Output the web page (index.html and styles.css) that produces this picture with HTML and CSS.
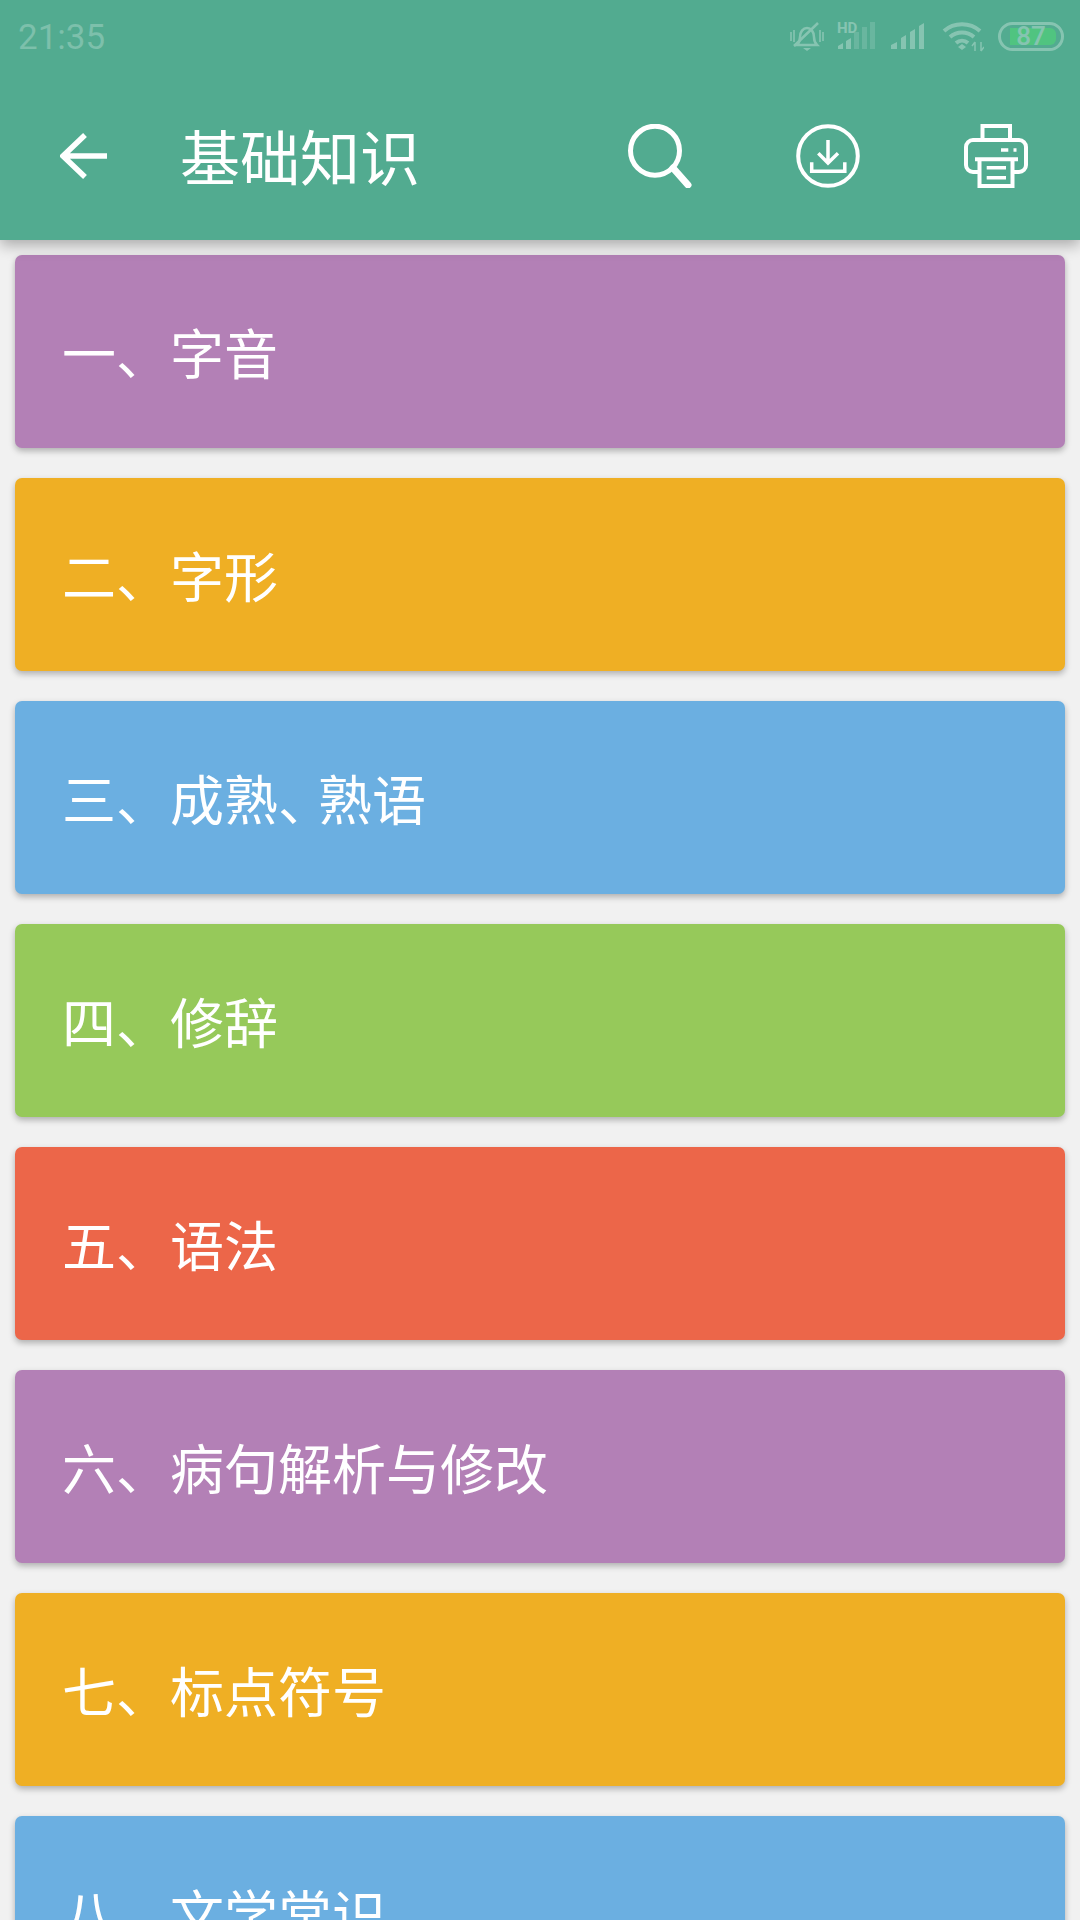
FILE: index.html

```html
<!DOCTYPE html>
<html lang="zh-CN">
<head>
  <meta charset="UTF-8">
  <meta name="viewport" content="width=device-width, initial-scale=1.0">
  <title>基础知识</title>
  <link rel="stylesheet" href="styles.css">
</head>
<body>

  <header class="appbar">
    <div class="status-bar">
      <span class="time">21:35</span>
      <div class="status-icons">
        <svg class="st-bell" width="34" height="30" viewBox="0 0 34 30">
          <path d="M7 23c2-2 3-4 3-8 0-5 3-9 7-9s7 4 7 9c0 4 1 6 3 8z" fill="none" stroke="#fff" stroke-width="2.500"/>
          <path d="M13 26h8l-4 3z" fill="#fff"/>
          <path d="M4 24L28 1" stroke="#fff" stroke-width="2.500"/>
          <path d="M1 10v9M4 8v12M30 8v12M33 10v9" stroke="#fff" stroke-width="1.600"/>
        </svg>
        <svg class="st-hd" width="40" height="28" viewBox="0 0 40 28">
          <text x="0" y="11" class="hd-label">HD</text>
          <path d="M1 27v-3l5-3v6zM9 27v-8l5-3v11z" fill="#fff"/>
          <path d="M17 27V10h5v17zM25 27V5h5v22zM33 27V0h5v27z" fill="#fff" opacity=".45"/>
        </svg>
        <svg class="st-signal" width="39" height="28" viewBox="0 0 39 28">
          <path d="M1 27v-4l6-3v7zM11 27V16l5-3v14zM20 27V10l5-3v20zM29 27V4l5-3v26z" fill="#fff"/>
        </svg>
        <svg class="st-wifi" width="42" height="30" viewBox="0 0 42 30">
          <path d="M2 9c10-9 26-9 36 0M8 15c7-6 17-6 24 0M14 21c3.500-3 8.500-3 12 0" fill="none" stroke="#fff" stroke-width="4"/>
          <path d="M16 25l4-3 4 3-4 3z" fill="#fff"/>
          <path d="M33 20v9M30 24l3-4M39 20v9M39 29l3-4" fill="none" stroke="#fff" stroke-width="1.500"/>
        </svg>
        <div class="battery">
          <div class="battery-fill"></div>
          <span class="battery-num">87</span>
        </div>
      </div>
    </div>
    <div class="toolbar">
      <svg class="back-icon" width="48" height="48" viewBox="0 0 48 48">
        <path d="M25 3L3 24l22 21M3 24h44" fill="none" stroke="#fff" stroke-width="5.500"/>
      </svg>
      <h1 class="page-title">基础知识</h1>
      <div class="actions">
        <svg width="64" height="64" viewBox="0 0 64 64">
          <circle cx="27" cy="26.700" r="24.500" fill="none" stroke="#fff" stroke-width="5"/>
          <path d="M45 44l15 17" stroke="#fff" stroke-width="7" stroke-linecap="round"/>
        </svg>
        <svg width="64" height="64" viewBox="0 0 64 64">
          <circle cx="32" cy="32" r="29.800" fill="none" stroke="#fff" stroke-width="4"/>
          <path d="M32 16v23M22.300 29.300L32 39l10-9.700M15.700 38.300v9H48.800v-9" fill="none" stroke="#fff" stroke-width="3.500"/>
        </svg>
        <svg width="64" height="64" viewBox="0 0 64 64">
          <path d="M18.500 15V2h27.500v13" fill="none" stroke="#fff" stroke-width="4"/>
          <path d="M14 48H9a7 7 0 0 1-7-7V23a7 7 0 0 1 7-7h46a7 7 0 0 1 7 7v18a7 7 0 0 1-7 7h-5" fill="none" stroke="#fff" stroke-width="4"/>
          <path d="M15.500 36v26h33V36M11 35.300h43" fill="none" stroke="#fff" stroke-width="4"/>
          <path d="M22.700 43.700H42M22.700 53.700H42M37 26h7.300M49.500 26h3" fill="none" stroke="#fff" stroke-width="3.500"/>
        </svg>
      </div>
    </div>
  </header>

  <main class="card-list">
    <div class="card purple">一、字音</div>
    <div class="card orange">二、字形</div>
    <div class="card blue"><span>三、成熟<span class="tight">、</span>熟语</span></div>
    <div class="card green">四、修辞</div>
    <div class="card red">五、语法</div>
    <div class="card purple">六、病句解析与修改</div>
    <div class="card orange">七、标点符号</div>
    <div class="card blue">八、文学常识</div>
  </main>

</body>
</html>
```

FILE: styles.css

```css
html, body {
  margin: 0;
  padding: 0;
  height: 1920px;
  overflow: hidden;
}

body {
  background: #f1f1f1;
  font-family: "Noto Sans CJK SC", "Noto Sans", sans-serif;
}

.appbar {
  position: relative;
  z-index: 2;
  height: 240px;
  background: #52ab90;
  box-shadow: 0 5px 14px rgba(0, 0, 0, 0.3);
}

.status-bar {
  height: 72px;
  display: flex;
  align-items: flex-start;
  justify-content: space-between;
  padding: 0 16px 0 18px;
  color: rgba(255, 255, 255, 0.25);
}

.time {
  font-family: Roboto, sans-serif;
  font-size: 35px;
  line-height: 36px;
  margin-top: 20px;
}

.status-icons {
  display: flex;
  align-items: flex-start;
  gap: 13px;
  padding-top: 22px;
  opacity: 0.3;
}

.st-hd {
  overflow: visible;
}

.hd-label {
  font-family: Roboto, sans-serif;
  font-size: 15px;
  font-weight: 700;
  fill: #fff;
}

.battery {
  position: relative;
  width: 66px;
  height: 29px;
  box-sizing: border-box;
  border: 3px solid #fff;
  border-radius: 15px;
  margin-left: 1px;
}

.battery-fill {
  position: absolute;
  top: 3px;
  left: 9px;
  width: 46px;
  height: 17px;
  background: #4cff5c;
  border-radius: 0 6px 6px 0;
}

.battery-num {
  position: relative;
  display: block;
  text-align: center;
  font-family: Roboto, sans-serif;
  font-size: 26px;
  line-height: 23px;
  font-weight: 500;
  color: #fff;
}

.toolbar {
  height: 168px;
  display: flex;
  align-items: center;
  padding-left: 60px;
}

.page-title {
  margin: 0 0 0 72px;
  font-size: 60px;
  font-weight: 400;
  color: #fff;
  position: relative;
  top: -2px;
}

.actions {
  margin-left: auto;
  display: flex;
  gap: 104px;
  padding-right: 52px;
}

.card-list {
  display: flex;
  flex-direction: column;
  gap: 30px;
  padding: 15px 15px 0;
}

.card {
  flex: none;
  height: 193px;
  display: flex;
  align-items: center;
  padding-left: 47px;
  border-radius: 7px;
  box-shadow: 0 3px 6px rgba(0, 0, 0, 0.28);
  color: #fff;
  font-size: 54px;
  font-weight: 400;
}

/* second 、 sits closer to its neighbours in the reference */
.tight {
  letter-spacing: -14px;
}

.purple { background: #b380b6; }
.orange { background: #efaf24; }
.blue { background: #6bafe1; }
.green { background: #96c95a; }
.red { background: #ec6649; }
```
